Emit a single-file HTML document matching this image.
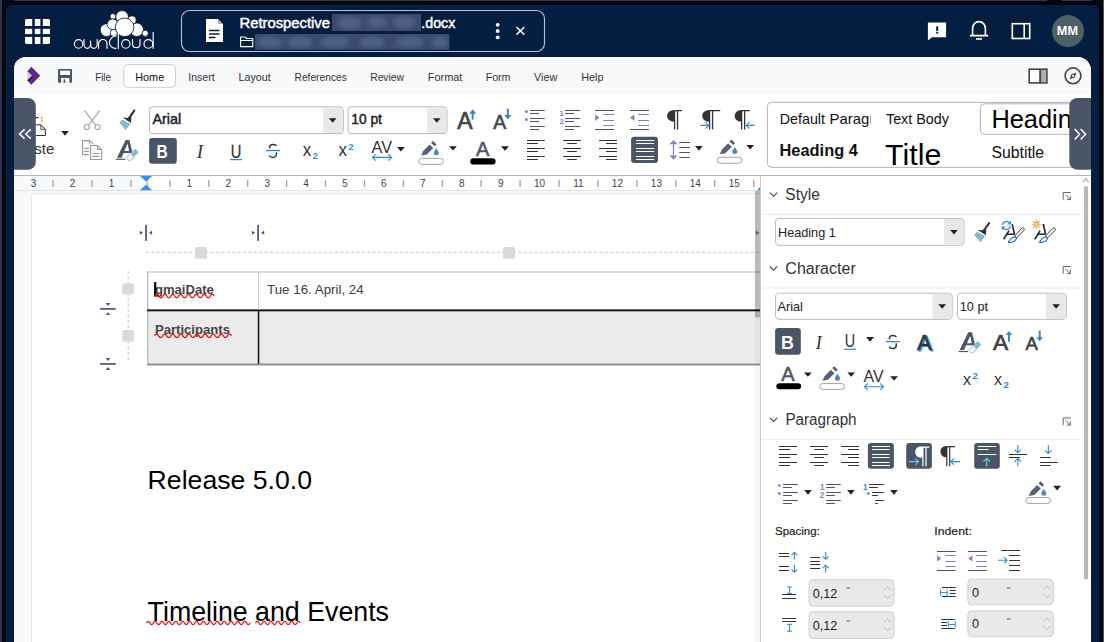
<!DOCTYPE html>
<html><head><meta charset="utf-8">
<style>
html,body{margin:0;padding:0;width:1104px;height:642px;overflow:hidden;background:#060a1a}
svg{display:block}
text{font-family:"Liberation Sans",sans-serif}
</style></head>
<body>
<svg width="1104" height="642" viewBox="0 0 1104 642">
<defs>
<filter id="blur" x="-20%" y="-50%" width="140%" height="200%"><feGaussianBlur stdDeviation="2"/></filter>
</defs>
<!-- outer frame -->
<rect x="0" y="0" width="1104" height="642" fill="#03060f"/>
<rect x="14" y="0" width="1033" height="1" fill="#33384e"/><rect x="1062" y="0" width="30" height="1" fill="#33384e"/>
<rect x="0" y="0" width="2" height="642" fill="#2e3347"/>
<rect x="1103" y="0" width="1" height="642" fill="#555"/>
<rect x="6" y="5" width="1093" height="700" rx="5" fill="#041e42"/>

<!-- HEADER -->
<g id="header">
<!-- grid icon -->
<rect x="25" y="19" width="25" height="24.9" rx="1.6" fill="#fff"/>
<g fill="#041e42"><rect x="32.2" y="18" width="2.6" height="27"/><rect x="40.4" y="18" width="2.4" height="27"/><rect x="24" y="26" width="27" height="2.8"/><rect x="24" y="34.1" width="27" height="2.8"/></g>
<!-- ownCloud logo -->
<g fill="#fff" stroke="#041e42" stroke-width="0.85">
<circle cx="106.6" cy="30.1" r="6.4"/>
<circle cx="136.7" cy="29.7" r="6.8"/>
<circle cx="145.2" cy="33.3" r="3.1"/>
<circle cx="132" cy="20" r="4.1"/>
<circle cx="112.9" cy="16.5" r="2.9"/>
<circle cx="122.1" cy="16.9" r="6.3"/>
<circle cx="112.6" cy="24.3" r="5.4"/>
<circle cx="113.8" cy="32.9" r="3.6"/>
<circle cx="124.6" cy="27.3" r="9.3"/>
</g>
<g fill="none" stroke="#fff" stroke-width="1.15" stroke-linecap="round">
<ellipse cx="78.6" cy="43.9" rx="4.2" ry="4.3"/>
<path d="M84 39.6 V44.3 A3.2 4 0 0 0 90.6 44.3 V41 M90.6 44.3 A3.2 4 0 0 0 97.2 44.3 V39.6"/>
<path d="M98.6 48.3 V43.8 A4.2 4.3 0 0 1 107 43.8 V48.3"/>
<path d="M116 36 A7 7 0 0 0 109.5 43 A6 5.3 0 0 0 116 48.3"/>
<path d="M118.3 32.5 V48.3"/>
<ellipse cx="125.8" cy="43.9" rx="4.2" ry="4.3"/>
<path d="M132.5 39.6 V44.3 A3.8 4 0 0 0 140 44.3 V39.6"/>
<ellipse cx="148.4" cy="43.9" rx="4.4" ry="4.3"/>
<path d="M153.2 32.5 V48.3"/>
</g>
<!-- filename box -->
<rect x="181.5" y="10.5" width="363" height="41" rx="8" fill="none" stroke="#b8c2d4" stroke-width="1.1"/>
<path d="M206 19 H218 L223 24 V42 H206 Z" fill="#fff"/>
<path d="M218 19 V24 H223" fill="#041e42" opacity="0.35"/>
<g stroke="#041e42" stroke-width="1.4"><path d="M209 30.5 H219.5 M209 34 H219.5 M209 37.5 H215.5"/></g>
<text x="239.5" y="28.2" font-size="14" fill="#fff" stroke="#fff" stroke-width="0.45" textLength="90.5" lengthAdjust="spacingAndGlyphs">Retrospective</text>
<clipPath id="cb1"><rect x="332.1" y="14.1" width="88.9" height="16.9"/></clipPath>
<g clip-path="url(#cb1)"><rect x="332" y="14" width="90" height="18" fill="#3a4b6d"/>
<g fill="#4f6183" filter="url(#blur)"><ellipse cx="350" cy="23" rx="12" ry="6"/><ellipse cx="377" cy="22" rx="10" ry="6"/><ellipse cx="404" cy="22.5" rx="11" ry="6"/></g></g>
<text x="421.3" y="28.2" font-size="14" fill="#fff" stroke="#fff" stroke-width="0.45" textLength="34" lengthAdjust="spacingAndGlyphs">.docx</text>
<path d="M240.6 37 H245 L246.5 38.5 H252.8 V46.6 H240.6 Z M240.6 40.5 H252.8" fill="none" stroke="#fff" stroke-width="1.1"/>
<clipPath id="cb2"><rect x="255" y="34.1" width="194.3" height="15.7"/></clipPath>
<g clip-path="url(#cb2)"><rect x="255" y="34" width="195" height="16" fill="#3a4b6d"/>
<g fill="#4f6183" filter="url(#blur)"><ellipse cx="270" cy="42" rx="12" ry="5.5"/><ellipse cx="300" cy="42" rx="12" ry="5.5"/><ellipse cx="335" cy="42" rx="14" ry="5.5"/><ellipse cx="372" cy="42" rx="13" ry="5.5"/><ellipse cx="410" cy="42" rx="14" ry="5.5"/><ellipse cx="440" cy="42" rx="9" ry="5.5"/></g></g>
<g fill="#fff"><circle cx="497.7" cy="24.8" r="1.9"/><circle cx="497.7" cy="31" r="1.9"/><circle cx="497.7" cy="37.3" r="1.9"/></g>
<path d="M516.5 27 L524.3 34.8 M524.3 27 L516.5 34.8" stroke="#fff" stroke-width="1.5"/>
<!-- right icons -->
<path d="M927.9 22.5 H946.1 V37.3 H932 L927.9 40.5 Z" fill="#fff"/>
<rect x="936.2" y="26.4" width="2" height="4.6" fill="#041e42"/><rect x="936.2" y="31.9" width="2" height="1.7" fill="#041e42"/>
<path d="M972.6 35.4 V28.6 A6.4 7 0 0 1 985.4 28.6 V35.4 M970 35.6 H988.2" fill="none" stroke="#fff" stroke-width="1.6"/>
<rect x="976" y="38.2" width="6" height="1.6" fill="#fff"/>
<rect x="1012.3" y="23.7" width="17.4" height="14.8" fill="none" stroke="#fff" stroke-width="1.6"/>
<rect x="1023.4" y="23.7" width="1.6" height="14.8" fill="#fff"/>
<circle cx="1068" cy="31" r="16" fill="#4e5f66"/>
<text x="1056.8" y="35.4" font-size="13" font-weight="bold" fill="#fff" textLength="21.2" lengthAdjust="spacingAndGlyphs">MM</text>
</g>

<!-- PANEL -->
<path d="M14 69 A12 12 0 0 1 26 57 H1077.5 A13.5 13.5 0 0 1 1091 70.5 V642 H14 Z" fill="#fff"/>
<!-- menubar -->
<path d="M14 69 A12 12 0 0 1 26 57 H1077.5 A13.5 13.5 0 0 1 1091 70.5 V94 H14 Z" fill="#f8f9fa"/>

<!-- menubar content -->
<path d="M27.3 71.3 L31.4 66.8 L40.2 75.8 L31.4 84.8 L27.3 80.4 L31.8 75.8 Z" fill="#5f2590"/>
<path d="M27.3 71.3 L31.8 75.8 L27.3 80.4 Z" fill="#cbcbcb"/>
<path d="M27.3 80.4 L31.8 75.8 L33 77 L29 81.5 Z" fill="#2d0f45" opacity="0.7"/>
<rect x="58" y="68.9" width="14" height="13.9" rx="0.8" fill="#4a5568"/>
<rect x="60.2" y="70.6" width="9.8" height="4.4" fill="#fff"/>
<rect x="61" y="78" width="8.4" height="4.8" fill="#fff"/>
<rect x="63.6" y="79.3" width="1.6" height="3.5" fill="#4a5568"/>
<rect x="123.9" y="64.5" width="51.6" height="22.8" rx="4" fill="#fff" stroke="#cdcfd2" stroke-width="1"/>
<g font-size="11.3" fill="#333">
<text x="95.2" y="81" textLength="15.8" lengthAdjust="spacingAndGlyphs">File</text>
<text x="135.2" y="81" fill="#111" textLength="29" lengthAdjust="spacingAndGlyphs">Home</text>
<text x="188.3" y="81" textLength="26.3" lengthAdjust="spacingAndGlyphs">Insert</text>
<text x="238.5" y="81" textLength="32.3" lengthAdjust="spacingAndGlyphs">Layout</text>
<text x="294.5" y="81" textLength="52.3" lengthAdjust="spacingAndGlyphs">References</text>
<text x="370.2" y="81" textLength="33.8" lengthAdjust="spacingAndGlyphs">Review</text>
<text x="427.8" y="81" textLength="34.5" lengthAdjust="spacingAndGlyphs">Format</text>
<text x="485.7" y="81" textLength="24.7" lengthAdjust="spacingAndGlyphs">Form</text>
<text x="534" y="81" textLength="23.2" lengthAdjust="spacingAndGlyphs">View</text>
<text x="581.2" y="81" textLength="22.2" lengthAdjust="spacingAndGlyphs">Help</text>
</g>
<rect x="1029.2" y="69.2" width="17.7" height="13.7" fill="#fff" stroke="#444" stroke-width="1.6"/>
<rect x="1041" y="70" width="5.1" height="12.1" fill="#b0b0b0"/>
<rect x="1039.2" y="69.2" width="1.9" height="13.7" fill="#444"/>
<circle cx="1073" cy="75.8" r="7.9" fill="none" stroke="#444" stroke-width="1.6"/>
<path d="M1076.4 72.4 L1074.6 77.4 L1069.6 79.2 L1071.4 74.2 Z" fill="#444"/>
<circle cx="1073" cy="75.8" r="1.1" fill="#fff"/>

<!-- TOOLBAR -->
<rect x="14" y="94" width="1077" height="81" fill="#fff"/>
<!-- left scroll btn -->
<path d="M14 98 H27.8 A8 8 0 0 1 35.8 106 V161.8 A8 8 0 0 1 27.8 169.8 H14 Z" fill="#4b5568"/>
<path d="M24.6 129.4 L19.6 134 L24.6 138.6 M30.8 129.4 L25.8 134 L30.8 138.6" fill="none" stroke="#fff" stroke-width="1.5"/>
<!-- paste partial -->
<g>
<path d="M35.5 117.6 H38.6" stroke="#333" stroke-width="1.3" fill="none"/>
<path d="M40.6 117.3 H42 V122.3" stroke="#f0a030" stroke-width="1.2" fill="none"/>
<path d="M36 124.8 H40.9 L45.4 129.3 V135.5 H36" fill="#f8f8f8" stroke="#333" stroke-width="1"/>
<path d="M40.9 124.8 V129.3 H45.4" fill="none" stroke="#333" stroke-width="0.9"/>
<text x="34.3" y="154.2" font-size="15" fill="#333">ste</text>
</g>
<path d="M61.2 131 H68.8 L65 135.8 Z" fill="#222"/>
<!-- scissors -->
<g fill="none" stroke="#a8a8a8" stroke-width="1.2">
<path d="M84.5 110.3 L95.5 124.8 M99.8 110.3 L88.8 124.8"/>
<circle cx="86.8" cy="127" r="2.5"/><circle cx="97.6" cy="127" r="2.5"/>
</g>
<!-- copy -->
<g fill="none" stroke="#9a9a9a" stroke-width="1.1">
<path d="M88.9 154.6 H82.6 V140.6 H89.6 L93.4 144.2"/>
<path d="M89.6 140.6 V143.7"/>
<path d="M84.3 148.4 H88.8 M84.3 151.4 H88.8"/>
<path d="M90.5 145.5 H97.6 L101.7 149.4 V159.5 H90.5 Z" fill="#fff"/>
<path d="M97.6 145.5 V149.4 H101.7"/>
<path d="M92.4 153.5 H99.8 M92.4 156.4 H99.8"/>
</g>
<!-- clone formatting brush -->
<path d="M134.3 110.7 L129.3 117.8" stroke="#333" stroke-width="2.1" stroke-linecap="round"/>
<path d="M122.8 117.6 L127.8 117.9 L129.6 116.4 L131.4 117.9 L130.9 122.9 Z" fill="#333"/>
<path d="M122.2 119.4 L130.4 124 L125.7 129.9 L119.3 122.6 Z" fill="#80bcd0"/>
<!-- clear formatting -->
<g id="clrfmt">
<path fill-rule="evenodd" d="M117 157.7 L125.7 140.1 H129.4 L132 150.8 L131.3 153 H123.5 L121.6 157.7 Z M124.4 151 L127.6 143.6 L129.1 151 Z" fill="#4a5568"/>
<rect x="116.1" y="158.7" width="9.3" height="1.2" fill="#4a5568"/>
<path d="M135 148.8 L138.7 152.3 L134.15 156.95 L130.55 153.35 Z" fill="#80bcd0"/>
<path d="M130.55 153.35 L134.15 156.95 L129.6 161.3 L126.3 157.9 Z" fill="#fff" stroke="#80bcd0" stroke-width="1"/>
</g>
<!-- font name box -->
<rect x="149.5" y="106.8" width="193.8" height="26.8" rx="3" fill="#fff" stroke="#b8b8b8" stroke-width="1"/>
<path d="M323 107.3 H340.3 A2.5 2.5 0 0 1 342.8 109.8 V130.6 A2.5 2.5 0 0 1 340.3 133.1 H323 Z" fill="#e8e8e8"/>
<path d="M328.9 118.3 H336.5 L332.7 122.8 Z" fill="#222"/>
<text x="152.4" y="124.2" font-size="13.8" fill="#222" stroke="#222" stroke-width="0.45" textLength="28.8" lengthAdjust="spacingAndGlyphs">Arial</text>
<rect x="348.2" y="106.8" width="98.8" height="26.8" rx="3" fill="#fff" stroke="#b8b8b8" stroke-width="1"/>
<path d="M427 107.3 H444 A2.5 2.5 0 0 1 446.5 109.8 V130.6 A2.5 2.5 0 0 1 444 133.1 H427 Z" fill="#e8e8e8"/>
<path d="M433 118.3 H440.6 L436.8 122.8 Z" fill="#222"/>
<text x="351.3" y="124.2" font-size="13.8" fill="#222" stroke="#222" stroke-width="0.45" textLength="30.6" lengthAdjust="spacingAndGlyphs">10 pt</text>
<!-- bold -->
<rect x="149.1" y="138" width="27.7" height="25.8" rx="3" fill="#4b5568"/>
<text x="156.6" y="158" font-size="18.8" font-weight="bold" fill="#fff" textLength="11.2" lengthAdjust="spacingAndGlyphs">B</text>
<text x="200" y="157.8" font-size="19" font-style="italic" fill="#333" font-family="Liberation Serif" text-anchor="middle" style="font-family:'Liberation Serif',serif">I</text>
<text x="230.7" y="158" font-size="19" fill="#333" stroke="#333" stroke-width="0.3" textLength="10.6" lengthAdjust="spacingAndGlyphs">U</text>
<rect x="230" y="159" width="12" height="1.2" fill="#2a8ad8"/>
<!-- strike -->
<g id="strk"><path d="M269.7 148.3 C269.1 145.7 270.9 144.4 273 144.4 C274.7 144.4 275.9 145 276.6 145.9 M276.3 152.3 C277.1 155.5 275.4 157.5 273 157.5 C271.2 157.5 269.9 156.8 269.3 155.5" fill="none" stroke="#333" stroke-width="1.5"/>
<rect x="266" y="149.9" width="14.1" height="1.3" fill="#2a8ad8"/></g>
<!-- subscript -->
<text x="302.8" y="155.7" font-size="17.5" fill="#333" textLength="8.5" lengthAdjust="spacingAndGlyphs">x</text>
<text x="312.8" y="158.7" font-size="9" font-weight="bold" fill="#2a8ad8">2</text>
<text x="338.6" y="155.7" font-size="17.5" fill="#333" textLength="8.5" lengthAdjust="spacingAndGlyphs">x</text>
<text x="348.6" y="150" font-size="9" font-weight="bold" fill="#2a8ad8">2</text>
<!-- spacing AV -->
<text x="371.5" y="152.9" font-size="16.3" fill="#333" textLength="20.5" lengthAdjust="spacingAndGlyphs">AV</text>
<path d="M372.5 157.4 H391.5 M375.8 154.2 L372.5 157.4 L375.8 160.6 M388.2 154.2 L391.5 157.4 L388.2 160.6" fill="none" stroke="#2a8ad8" stroke-width="1.1"/>
<path d="M397 147 H404.8 L400.9 151.4 Z" fill="#222"/>
<!-- highlight -->
<g>
<path d="M421.3 155.4 L423.2 151 L429.6 144.4 L433.3 147.9 L426.8 154.4 Z" fill="#56607a"/>
<path d="M431 142.7 L433 140.8 L436.6 144.4 L434.6 146.3 Z" fill="#56607a"/>
<path d="M436.3 148.2 C435 150.5 433.8 151.7 433.8 152.8 A2.5 2.5 0 0 0 438.8 152.8 C438.8 151.7 437.6 150.5 436.3 148.2 Z" fill="#4a86c8"/>
<rect x="418.6" y="158.4" width="24.8" height="6" rx="3" fill="#fff" stroke="#999" stroke-width="0.9"/>
</g>
<path d="M449.1 146.2 H456.8 L453 150.6 Z" fill="#222"/>

<!-- toolbar row1 right -->
<text x="457.2" y="128.6" font-size="24.3" fill="#444" stroke="#444" stroke-width="0.7" textLength="15.3" lengthAdjust="spacingAndGlyphs">A</text>
<path d="M472.7 119.6 V110.5" stroke="#3d85c6" stroke-width="2"/><path d="M469.2 113.8 L472.7 109.3 L476.2 113.8 Z" fill="#3d85c6"/>
<text x="493.3" y="128.6" font-size="19.8" fill="#444" stroke="#444" stroke-width="0.6" textLength="12.9" lengthAdjust="spacingAndGlyphs">A</text>
<path d="M507.8 108.7 V117.5" stroke="#3d85c6" stroke-width="2"/><path d="M504.3 115 L507.8 119.6 L511.3 115 Z" fill="#3d85c6"/>
<!-- bullets -->
<g fill="#8e7cc3"><circle cx="526.4" cy="111.4" r="1.5"/><circle cx="526.4" cy="119.4" r="1.5"/></g>
<path d="M530 110.5 H544.8 M530 113.5 H539 M530 118.5 H544.8 M530 121.5 H539 M530 126.5 H544.8 M530 129.5 H539" stroke="#4a5568" stroke-width="1"/>
<!-- numbering -->
<text x="559.6" y="115.6" font-size="8" font-weight="bold" fill="#8e7cc3">1</text>
<text x="559.4" y="124.2" font-size="8" font-weight="bold" fill="#8e7cc3">2</text>
<path d="M565 110.5 H580 M565 113.5 H574 M565 118.5 H580 M565 121.5 H574 M565 126.5 H580 M565 129.5 H574" stroke="#4a5568" stroke-width="1"/>
<!-- indent -->
<path d="M595.1 110.5 H614.1 M595.1 129.5 H614.1" stroke="#4a5568" stroke-width="1"/>
<path d="M603.2 114.5 H614.1 M603.2 120.5 H614.1 M603.2 125.5 H614.1" stroke="#8e7cc3" stroke-width="1"/>
<path d="M595.1 114.4 L599.4 117.6 L595.1 120.9 Z" fill="#8e7cc3"/>
<path d="M630 110.5 H649 M630 129.5 H649" stroke="#4a5568" stroke-width="1"/>
<path d="M638 114.5 H649 M638 120.5 H649 M638 125.5 H649" stroke="#8e7cc3" stroke-width="1"/>
<path d="M634.4 114.4 L630.1 117.6 L634.4 120.9 Z" fill="#8e7cc3"/>
<!-- pilcrows -->
<g id="pil">
<path d="M674.4 110 H682 V111.2 H678.2 V129.6 H676.9 V111.2 H675.2 V129.6 H674 V121.8 A7 5.9 0 0 1 674 110 Z" fill="#333"/>
</g>
<path d="M709.4 110 H720.2 V111.2 H713.2 V129.6 H711.9 V111.2 H710.2 V129.6 H709 V121.8 A7 5.9 0 0 1 709.4 110 Z" fill="#333"/>
<path d="M700.5 125.4 H708.6 M705.4 122.2 L708.6 125.4 L705.4 128.6" fill="none" stroke="#2a8ad8" stroke-width="1.1"/>
<path d="M741.2 110 H749.8 V111.2 H745.3 V129.6 H744 V111.2 H742.3 V129.6 H741 V121.8 A6.5 5.9 0 0 1 741.2 110 Z" fill="#333"/>
<path d="M746.3 125.4 H754.6 M749.5 122.2 L746.3 125.4 L749.5 128.6" fill="none" stroke="#2a8ad8" stroke-width="1.1"/>
<!-- row2 right -->
<text x="476" y="155.6" font-size="19.8" fill="#4a5568" stroke="#4a5568" stroke-width="0.5" textLength="13.4" lengthAdjust="spacingAndGlyphs">A</text>
<rect x="470.3" y="158.3" width="25.3" height="6.2" rx="3.1" fill="#000"/>
<path d="M501 146.3 H508.9 L505 150.7 Z" fill="#222"/>
<!-- align -->
<path d="M527 140.5 H544.8 M527 143.5 H537.9 M527 148.5 H544.8 M527 151.5 H537.9 M527 156.5 H544.8 M527 159.5 H537.9" stroke="#333" stroke-width="1"/>
<path d="M563 140.5 H581 M567.2 143.5 H576.8 M563 148.5 H581 M567.2 151.5 H576.8 M563 156.5 H581 M567.2 159.5 H576.8" stroke="#333" stroke-width="1"/>
<path d="M599.1 140.5 H616.9 M606 143.5 H616.9 M599.1 148.5 H616.9 M606 151.5 H616.9 M599.1 156.5 H616.9 M606 159.5 H616.9" stroke="#333" stroke-width="1"/>
<rect x="631.1" y="136.8" width="26.9" height="26.2" rx="3" fill="#4b5568"/>
<path d="M635.9 140.5 H654.2 M635.9 143.5 H654.2 M635.9 148.5 H654.2 M635.9 151.5 H654.2 M635.9 156.5 H654.2 M635.9 159.5 H654.2" stroke="#fff" stroke-width="1"/>
<!-- line spacing -->
<path d="M673.5 141.5 V158.3" stroke="#8e7cc3" stroke-width="1.2"/>
<path d="M669.4 144.2 L673.5 140.1 L677.6 144.2 Z M669.4 155.6 L673.5 159.7 L677.6 155.6 Z" fill="#8e7cc3"/>
<path d="M679.2 142.5 H689.9 M679.2 147.5 H689.9 M679.2 152.5 H689.9 M679.2 157.5 H689.9" stroke="#4a5568" stroke-width="1"/>
<path d="M695.1 146.1 H702.7 L698.9 150.7 Z" fill="#222"/>
<!-- para bg -->
<g transform="translate(298.5,-1.2)">
<path d="M421.3 155.4 L423.2 151 L429.6 144.4 L433.3 147.9 L426.8 154.4 Z" fill="#56607a"/>
<path d="M431 142.7 L433 140.8 L436.6 144.4 L434.6 146.3 Z" fill="#56607a"/>
<path d="M436.3 148.2 C435 150.5 433.8 151.7 433.8 152.8 A2.5 2.5 0 0 0 438.8 152.8 C438.8 151.7 437.6 150.5 436.3 148.2 Z" fill="#4a86c8"/>
<rect x="418.6" y="158.4" width="24.8" height="6" rx="3" fill="#fff" stroke="#999" stroke-width="0.9"/>
</g>
<path d="M746.3 144.9 H754 L750.2 149.5 Z" fill="#222"/>

<!-- styles box -->
<defs><clipPath id="clipDP"><rect x="770" y="100" width="100.8" height="30"/></clipPath></defs>
<rect x="767.4" y="102.4" width="340" height="65" rx="4" fill="#fff" stroke="#b5b5b5" stroke-width="1"/>
<g clip-path="url(#clipDP)" font-size="14.3" fill="#111"><text x="779.7" y="124" textLength="45.3" lengthAdjust="spacingAndGlyphs">Default</text><text x="829.6" y="124" textLength="39.6" lengthAdjust="spacingAndGlyphs">Parag</text><text x="869.4" y="124">r</text></g>
<text x="886" y="124.3" font-size="14.3" fill="#111">Text Body</text>
<rect x="980.4" y="103.8" width="120" height="30.5" rx="4" fill="#fff" stroke="#b5b5b5" stroke-width="1"/>
<text x="991.4" y="127.5" font-size="25.4" fill="#000">Heading 1</text>
<text x="779.5" y="156.1" font-size="16.4" font-weight="bold" fill="#111">Heading 4</text>
<text x="885" y="164.8" font-size="30.4" fill="#000">Title</text>
<text x="991.4" y="157.8" font-size="15.8" fill="#111">Subtitle</text>
<!-- right scroll btn -->
<path d="M1091 98 H1077.3 A8 8 0 0 0 1069.3 106 V161.7 A8 8 0 0 0 1077.3 169.7 H1091 Z" fill="#4b5568"/>
<path d="M1074.6 129 L1079.6 134.2 L1074.6 139.4 M1080.6 129 L1085.6 134.2 L1080.6 139.4" fill="none" stroke="#fff" stroke-width="1.5"/>
<rect x="1091" y="94" width="8" height="90" fill="#041e42"/>

<!-- RULER -->
<rect x="14" y="175" width="1077" height="1" fill="#b4b4b4"/>
<rect x="14" y="176" width="747" height="14" fill="#f8f9fa"/>
<rect x="147" y="176" width="613" height="14" fill="#fff"/>
<rect x="14" y="190" width="747" height="1" fill="#e3e4e6"/>
<g font-size="10" fill="#444" text-anchor="middle">
<text x="33.6" y="187" >3</text>
<text x="72.6" y="187" >2</text>
<text x="111.5" y="187" >1</text>
<text x="189.3" y="187">1</text>
<text x="228.2" y="187">2</text>
<text x="267.2" y="187">3</text>
<text x="306.1" y="187">4</text>
<text x="345.0" y="187">5</text>
<text x="383.9" y="187">6</text>
<text x="422.8" y="187">7</text>
<text x="461.8" y="187">8</text>
<text x="500.7" y="187">9</text>
<text x="539.6" y="187">10</text>
<text x="578.5" y="187">11</text>
<text x="617.4" y="187">12</text>
<text x="656.4" y="187">13</text>
<text x="695.3" y="187">14</text>
<text x="734.2" y="187">15</text>
</g>
<g fill="#a8a8a8">
<rect x="52.4" y="180" width="1.4" height="7"/>
<rect x="91.3" y="180" width="1.4" height="7"/>
<rect x="130.2" y="180" width="1.4" height="7"/>
<rect x="169.2" y="180" width="1.4" height="7"/>
<rect x="208.1" y="180" width="1.4" height="7"/>
<rect x="247.0" y="180" width="1.4" height="7"/>
<rect x="285.9" y="180" width="1.4" height="7"/>
<rect x="324.8" y="180" width="1.4" height="7"/>
<rect x="363.8" y="180" width="1.4" height="7"/>
<rect x="402.7" y="180" width="1.4" height="7"/>
<rect x="441.6" y="180" width="1.4" height="7"/>
<rect x="480.5" y="180" width="1.4" height="7"/>
<rect x="519.4" y="180" width="1.4" height="7"/>
<rect x="558.4" y="180" width="1.4" height="7"/>
<rect x="597.3" y="180" width="1.4" height="7"/>
<rect x="636.2" y="180" width="1.4" height="7"/>
<rect x="675.1" y="180" width="1.4" height="7"/>
<rect x="714.0" y="180" width="1.4" height="7"/>
<rect x="753.0" y="180" width="1.4" height="7"/>
</g>
<rect x="146.3" y="176" width="2" height="14" fill="#c8c8c8"/>
<path d="M139.9 176 H152.2 L146 181.6 Z M139.9 190.2 H152.2 L146 184.8 Z" fill="#2f8ff0"/>
<path d="M757 190.4 L760.4 186.5 V190.4 Z" fill="#2f8ff0"/>
<!-- DOC AREA -->
<rect x="14" y="191" width="747" height="451" fill="#f8f9fa"/>
<rect x="31.5" y="193.5" width="740" height="460" rx="1.5" fill="#fff" stroke="#e6e7e9" stroke-width="1"/>
<!-- col markers -->
<g fill="#505a70">
<rect x="145.1" y="224.9" width="1.8" height="16"/>
<path d="M139.8 230.8 L143.1 232.8 L139.8 234.8 Z M152.1 230.8 L148.8 232.8 L152.1 234.8 Z"/>
<rect x="257.2" y="224.9" width="1.8" height="16"/>
<path d="M251.9 230.8 L255.2 232.8 L251.9 234.8 Z M264.2 230.8 L260.9 232.8 L264.2 234.8 Z"/>
</g>
<path d="M145.9 252.3 H760.5" stroke="#c6c6c6" stroke-width="1" stroke-dasharray="3 2.4"/>
<rect x="195" y="246.9" width="12" height="11.9" rx="1.5" fill="#dadada"/>
<rect x="503" y="246.9" width="12" height="11.9" rx="1.5" fill="#dadada"/>
<!-- row markers -->
<path d="M128.2 271 V362" stroke="#c6c6c6" stroke-width="1" stroke-dasharray="3 2.4"/>
<rect x="122.3" y="283.2" width="11.6" height="11.4" rx="1.5" fill="#dadada"/>
<rect x="122.3" y="330" width="11.6" height="11.7" rx="1.5" fill="#dadada"/>
<g fill="#56607a">
<rect x="100" y="308" width="15.7" height="1.8"/>
<path d="M105.6 302.9 H110.5 L108.05 306 Z M105.6 315 H110.5 L108.05 311.9 Z"/>
<rect x="100" y="363" width="15.7" height="1.8"/>
<path d="M105.6 358 H110.5 L108.05 361.1 Z M105.6 370.1 H110.5 L108.05 367 Z"/>
</g>
<!-- table -->
<rect x="148" y="272" width="613" height="38" fill="#fff"/>
<rect x="148" y="311" width="613" height="53" fill="#ebebeb"/>
<rect x="147.2" y="271.2" width="613" height="1.6" fill="#d3d3d3"/>
<rect x="147.1" y="271.2" width="1.3" height="93.5" fill="#bdbdbd"/>
<rect x="258" y="272" width="1.2" height="38" fill="#cfcfcf"/>
<rect x="147.1" y="309.4" width="613" height="1.9" fill="#111"/>
<rect x="257.8" y="311" width="1.5" height="53" fill="#111"/>
<rect x="147.1" y="363.6" width="613" height="1.8" fill="#8a8a8a"/>
<text x="154.9" y="293.6" font-size="12.6" font-weight="bold" fill="#444" textLength="59" lengthAdjust="spacingAndGlyphs">gmaiDate</text>
<text x="154.9" y="333.5" font-size="12.6" font-weight="bold" fill="#444" textLength="75.1" lengthAdjust="spacingAndGlyphs">Participants</text>
<text x="267" y="293.7" font-size="12" fill="#404040" textLength="96.7" lengthAdjust="spacingAndGlyphs">Tue 16. April, 24</text>
<rect x="154.1" y="282" width="2.2" height="14.6" fill="#000"/>
<text x="147.6" y="489.2" font-size="26.65" fill="#000">Release 5.0.0</text>
<text x="147.6" y="620.5" font-size="26.75" fill="#000">Timeline and Events</text>
<path d="M155.0 296.0 Q156.97 292.20 158.95 296.00 Q160.92 299.80 162.90 296.00 Q164.87 292.20 166.85 296.00 Q168.82 299.80 170.80 296.00 Q172.77 292.20 174.75 296.00 Q176.72 299.80 178.70 296.00 Q180.67 292.20 182.65 296.00 Q184.62 299.80 186.60 296.00 Q188.57 292.20 190.55 296.00 Q192.52 299.80 194.50 296.00 Q196.47 292.20 198.45 296.00 Q200.42 299.80 202.40 296.00 Q204.37 292.20 206.35 296.00 Q208.32 299.80 210.30 296.00 Q212.27 292.20 214.25 296.00" fill="none" stroke="#f00" stroke-width="1.2"/>
<path d="M154.5 335.9 Q156.53 332.30 158.55 335.90 Q160.58 339.50 162.60 335.90 Q164.63 332.30 166.65 335.90 Q168.68 339.50 170.70 335.90 Q172.73 332.30 174.75 335.90 Q176.78 339.50 178.80 335.90 Q180.83 332.30 182.85 335.90 Q184.88 339.50 186.90 335.90 Q188.93 332.30 190.95 335.90 Q192.98 339.50 195.00 335.90 Q197.03 332.30 199.05 335.90 Q201.08 339.50 203.10 335.90 Q205.13 332.30 207.15 335.90 Q209.18 339.50 211.20 335.90 Q213.23 332.30 215.25 335.90 Q217.28 339.50 219.30 335.90 Q221.33 332.30 223.35 335.90 Q225.38 339.50 227.40 335.90 Q229.43 332.30 231.45 335.90" fill="none" stroke="#f00" stroke-width="1.2"/>
<path d="M146.5 623.0 Q148.22 619.60 149.95 623.00 Q151.67 626.40 153.40 623.00 Q155.12 619.60 156.85 623.00 Q158.57 626.40 160.30 623.00 Q162.02 619.60 163.75 623.00 Q165.47 626.40 167.20 623.00 Q168.92 619.60 170.65 623.00 Q172.37 626.40 174.10 623.00 Q175.82 619.60 177.55 623.00 Q179.27 626.40 181.00 623.00 Q182.72 619.60 184.45 623.00 Q186.17 626.40 187.90 623.00 Q189.62 619.60 191.35 623.00 Q193.07 626.40 194.80 623.00 Q196.52 619.60 198.25 623.00 Q199.97 626.40 201.70 623.00 Q203.42 619.60 205.15 623.00 Q206.87 626.40 208.60 623.00 Q210.32 619.60 212.05 623.00 Q213.77 626.40 215.50 623.00 Q217.22 619.60 218.95 623.00 Q220.67 626.40 222.40 623.00 Q224.12 619.60 225.85 623.00 Q227.57 626.40 229.30 623.00 Q231.02 619.60 232.75 623.00 Q234.47 626.40 236.20 623.00 Q237.92 619.60 239.65 623.00 Q241.37 626.40 243.10 623.00 Q244.82 619.60 246.55 623.00 Q248.27 626.40 250.00 623.00" fill="none" stroke="#f00" stroke-width="1.2"/>
<path d="M255.5 623.0 Q257.23 619.60 258.95 623.00 Q260.68 626.40 262.40 623.00 Q264.12 619.60 265.85 623.00 Q267.57 626.40 269.30 623.00 Q271.02 619.60 272.75 623.00 Q274.47 626.40 276.20 623.00 Q277.92 619.60 279.65 623.00 Q281.37 626.40 283.10 623.00 Q284.82 619.60 286.55 623.00 Q288.27 626.40 290.00 623.00 Q291.72 619.60 293.45 623.00 Q295.17 626.40 296.90 623.00 Q298.62 619.60 300.35 623.00" fill="none" stroke="#f00" stroke-width="1.2"/>
<!-- doc scrollbar -->
<rect x="755" y="317.4" width="5.5" height="325" fill="#000" opacity="0.035"/>
<rect x="755" y="191" width="5.5" height="126.4" fill="#000" opacity="0.27"/>
<path d="M756 230.5 L759.2 232.9 L756 235.3 Z" fill="#505a70"/>

<!-- SIDEBAR -->
<rect x="760.5" y="176" width="330.5" height="466" fill="#fff"/>
<rect x="760" y="175.5" width="1" height="467" fill="#cfcfcf"/>
<!-- sidebar scrollbar -->
<path d="M1082.7 182.3 L1085.8 178.6 L1088.9 182.3" fill="none" stroke="#c6c6c6" stroke-width="1.8"/>
<rect x="1083.9" y="186" width="4.2" height="393.5" rx="2.1" fill="#b8b8b8"/>
<!-- section headers -->
<g fill="none" stroke="#444" stroke-width="1.1">
<path d="M769.8 192.6 L773.5 196.3 L777.2 192.6"/>
<path d="M769.8 266.4 L773.5 270.1 L777.2 266.4"/>
<path d="M769.8 417.8 L773.5 421.5 L777.2 417.8"/>
</g>
<g font-size="15.6" fill="#333">
<text x="785.3" y="199.5" textLength="34.6" lengthAdjust="spacingAndGlyphs">Style</text>
<text x="785.3" y="273.8" textLength="70.5" lengthAdjust="spacingAndGlyphs">Character</text>
<text x="785.4" y="424.9" textLength="71.2" lengthAdjust="spacingAndGlyphs">Paragraph</text>
</g>
<g fill="none" stroke="#666" stroke-width="1">
<path d="M1063.2 199.7 V192.5 H1070.8 M1065.5 194.8 L1070.3 199.6 M1066.8 199.6 H1070.3 V196"/>
<path d="M1063.2 273.7 V266.5 H1070.8 M1065.5 268.8 L1070.3 273.6 M1066.8 273.6 H1070.3 V270"/>
<path d="M1063.2 425.2 V418 H1070.8 M1065.5 420.3 L1070.3 425.1 M1066.8 425.1 H1070.3 V421.5"/>
</g>
<rect x="761" y="214.1" width="320" height="1" fill="#ececec"/>
<rect x="761" y="287.6" width="320" height="1" fill="#ececec"/>
<rect x="761" y="438.9" width="320" height="1" fill="#ececec"/>
<!-- style dropdown -->
<rect x="775.5" y="218.5" width="188.5" height="26.8" rx="3.5" fill="#fff" stroke="#bdbdbd" stroke-width="1"/>
<path d="M944 219 H961 A2.5 2.5 0 0 1 963.5 221.5 V242.3 A2.5 2.5 0 0 1 961 244.8 H944 Z" fill="#e8e8e8"/>
<path d="M950.2 230 H957.8 L954 234.5 Z" fill="#222"/>
<text x="778" y="236.6" font-size="12.7" fill="#222" textLength="57.8" lengthAdjust="spacingAndGlyphs">Heading 1</text>
<!-- style icons -->
<g transform="translate(854.9,112.3)">
<path d="M134.3 110.7 L129.3 117.8" stroke="#333" stroke-width="2.1" stroke-linecap="round"/>
<path d="M122.8 117.6 L127.8 117.9 L129.6 116.4 L131.4 117.9 L130.9 122.9 Z" fill="#333"/>
<path d="M122.2 119.4 L130.4 124 L125.7 129.9 L119.3 122.6 Z" fill="#80bcd0"/>
</g>
<g fill="none" stroke="#2a8ad8" stroke-width="1.2">
<path d="M1002.4 225 A4.1 4.1 0 0 1 1009.8 223.2"/>
<path d="M1010.4 226 A4.1 4.1 0 0 1 1003 227.8"/>
</g>
<path d="M1011 220.8 V224.6 H1007.4 Z M1001.8 230.2 V226.4 H1005.4 Z" fill="#2a8ad8"/>
<g id="astyle">
<path d="M1003.6 239.2 L1009 230.6 M1012.2 224.3 L1014.5 234.2 M1007.1 234.2 H1014.6" fill="none" stroke="#262626" stroke-width="1.6"/>
<path d="M1023.8 228.3 A1.5 1.5 0 0 0 1021.6 228.3 L1014.6 236 L1016.6 237.8 L1023.8 230.4 A1.5 1.5 0 0 0 1023.8 228.3 Z" fill="#fff" stroke="#262626" stroke-width="0.9"/>
<path d="M1015.6 236.9 C1012.5 236.5 1009.5 239.5 1008.4 242.3 C1011.5 242.8 1015.5 241.5 1016.6 238.4 Z" fill="#fff" stroke="#1565c0" stroke-width="1.1"/>
</g>
<use href="#astyle" transform="translate(31.1,0)"/>
<path d="M1042.8 225.8 L1044 224.4" stroke="#262626" stroke-width="1.4"/>
<g stroke="#f68b1f" stroke-width="1.1" fill="none">
<circle cx="1036.4" cy="224.3" r="1.9" fill="#eef8fc"/>
<path d="M1036.4 219.8 V221.6 M1036.4 227 V228.8 M1031.9 224.3 H1033.7 M1039.1 224.3 H1040.9 M1033.2 221.1 L1034.5 222.4 M1038.3 226.2 L1039.6 227.5 M1039.6 221.1 L1038.3 222.4 M1034.5 226.2 L1033.2 227.5"/>
</g>
<!-- character dropdowns -->
<rect x="775.5" y="293.2" width="176.7" height="26.2" rx="3.5" fill="#fff" stroke="#bdbdbd" stroke-width="1"/>
<path d="M932.5 293.7 H949.2 A2.5 2.5 0 0 1 951.7 296.2 V316.4 A2.5 2.5 0 0 1 949.2 318.9 H932.5 Z" fill="#e8e8e8"/>
<path d="M938.4 304.2 H946 L942.2 308.7 Z" fill="#222"/>
<text x="777.5" y="310.6" font-size="12.7" fill="#222">Arial</text>
<rect x="957.5" y="293.2" width="108.9" height="26.2" rx="3.5" fill="#fff" stroke="#bdbdbd" stroke-width="1"/>
<path d="M1046 293.7 H1063.4 A2.5 2.5 0 0 1 1065.9 296.2 V316.4 A2.5 2.5 0 0 1 1063.4 318.9 H1046 Z" fill="#e8e8e8"/>
<path d="M1052.3 304.2 H1059.9 L1056.1 308.7 Z" fill="#222"/>
<text x="959.8" y="310.6" font-size="12.7" fill="#222">10 pt</text>
<!-- char row 1 -->
<rect x="775.1" y="328" width="25.7" height="26.7" rx="3" fill="#4b5568"/>
<text x="787.3" y="349.3" font-size="17.8" font-weight="bold" fill="#fff" text-anchor="middle">B</text>
<text x="818.8" y="349.3" font-size="18" font-style="italic" fill="#333" text-anchor="middle" style="font-family:'Liberation Serif',serif">I</text>
<text x="850" y="347.1" font-size="17.5" fill="#333" text-anchor="middle" textLength="10.4" lengthAdjust="spacingAndGlyphs">U</text>
<rect x="844.2" y="348.7" width="11.8" height="1.2" fill="#2a8ad8"/>
<path d="M866.1 337 H874 L870.05 341.7 Z" fill="#222"/>
<use href="#strk" transform="translate(619.8,191.1)"/>
<text x="918.4" y="350.7" font-size="22.4" fill="#2a8ad8" stroke="#2a8ad8" stroke-width="0.8" textLength="14.5" lengthAdjust="spacingAndGlyphs">A</text>
<text x="917" y="350.3" font-size="22.4" fill="#333" stroke="#333" stroke-width="0.6" textLength="14.5" lengthAdjust="spacingAndGlyphs">A</text>
<use href="#clrfmt" transform="translate(842.6,192.2)"/>
<text x="993.1" y="350.2" font-size="22.8" fill="#444" stroke="#444" stroke-width="0.7" textLength="15.2" lengthAdjust="spacingAndGlyphs">A</text>
<path d="M1009 341.7 V332.5" stroke="#3d85c6" stroke-width="2"/><path d="M1005.7 335 L1009 330.9 L1012.3 335 Z" fill="#3d85c6"/>
<text x="1025.6" y="350.2" font-size="18.4" fill="#444" stroke="#444" stroke-width="0.6" textLength="12.4" lengthAdjust="spacingAndGlyphs">A</text>
<path d="M1039.7 330.6 V339" stroke="#3d85c6" stroke-width="2"/><path d="M1036.4 337.2 L1039.7 341.3 L1043 337.2 Z" fill="#3d85c6"/>
<!-- char row 3 -->
<text x="781.2" y="381.3" font-size="19.8" fill="#4a5568" stroke="#4a5568" stroke-width="0.5" textLength="13.4" lengthAdjust="spacingAndGlyphs">A</text>
<rect x="776.3" y="383.2" width="24.8" height="6" rx="3" fill="#000"/>
<path d="M804 372.5 H811.8 L807.9 376.8 Z" fill="#222"/>
<g transform="translate(401.2,225.4)">
<path d="M421.3 155.4 L423.2 151 L429.6 144.4 L433.3 147.9 L426.8 154.4 Z" fill="#56607a"/>
<path d="M431 142.7 L433 140.8 L436.6 144.4 L434.6 146.3 Z" fill="#56607a"/>
<path d="M436.3 148.2 C435 150.5 433.8 151.7 433.8 152.8 A2.5 2.5 0 0 0 438.8 152.8 C438.8 151.7 437.6 150.5 436.3 148.2 Z" fill="#4a86c8"/>
<rect x="418.6" y="158.2" width="24.8" height="5.8" rx="2.9" fill="#fff" stroke="#999" stroke-width="0.9"/>
</g>
<path d="M847.4 372.5 H855 L851.2 376.8 Z" fill="#222"/>
<text x="863.6" y="381.6" font-size="15.8" fill="#333" textLength="19.9" lengthAdjust="spacingAndGlyphs">AV</text>
<path d="M864.5 386.7 H883.5 M867.8 383.5 L864.5 386.7 L867.8 389.9 M880.2 383.5 L883.5 386.7 L880.2 389.9" fill="none" stroke="#2a8ad8" stroke-width="1.1"/>
<path d="M890.2 376.3 H898 L894.1 380.6 Z" fill="#222"/>
<text x="963" y="384.8" font-size="17" fill="#333" textLength="8" lengthAdjust="spacingAndGlyphs">x</text>
<text x="972.5" y="378.9" font-size="9.6" font-weight="bold" fill="#2a8ad8">2</text>
<text x="994.1" y="384.8" font-size="17" fill="#333" textLength="8" lengthAdjust="spacingAndGlyphs">x</text>
<text x="1003.4" y="387.8" font-size="9.6" font-weight="bold" fill="#2a8ad8">2</text>

<!-- paragraph row 1 -->
<path d="M778.9 446.5 H797 M778.9 449.5 H789.9 M778.9 454.5 H797 M778.9 457.5 H789.9 M778.9 462.5 H797 M778.9 465.5 H789.9 " stroke="#333" stroke-width="1"/>
<path d="M810 446.5 H828.1 M814.4 449.5 H823.9 M810 454.5 H828.1 M814.4 457.5 H823.9 M810 462.5 H828.1 M814.4 465.5 H823.9 " stroke="#333" stroke-width="1"/>
<path d="M841 446.5 H859 M848 449.5 H859 M841 454.5 H859 M848 457.5 H859 M841 462.5 H859 M848 465.5 H859 " stroke="#333" stroke-width="1"/>
<rect x="867.9" y="443.1" width="26" height="25.7" rx="3" fill="#4b5568"/>
<path d="M872.1 446.5 H889.8 M872.1 449.5 H889.8 M872.1 454.5 H889.8 M872.1 457.5 H889.8 M872.1 462.5 H889.8 M872.1 465.5 H889.8 " stroke="#fff" stroke-width="1"/>
<rect x="906.2" y="443.1" width="25.7" height="25.7" rx="3" fill="#4b5568"/>
<path d="M919.3 446.5 H929.3 V447.7 H926.6 V466.2 H925.4 V447.7 H923.5 V466.2 H922.3 V457.5 A5.5 5.5 0 0 1 919.3 446.5 Z" fill="#fff"/>
<path d="M908.9 461.6 H918.5 M915.3 458.4 L918.5 461.6 L915.3 464.8" fill="none" stroke="#5ed0f0" stroke-width="1.1"/>
<path d="M945.8 446 H955 V447.2 H950.3 V466.2 H949.1 V447.2 H947.4 V466.2 H946.2 V457.2 A5.6 5.6 0 0 1 945.8 446 Z" fill="#333"/>
<path d="M950.8 461.6 H960.1 M954 458.4 L950.8 461.6 L954 464.8" fill="none" stroke="#2a8ad8" stroke-width="1.1"/>
<rect x="974.2" y="443.1" width="25.6" height="25.7" rx="3" fill="#4b5568"/>
<path d="M977.8 446.5 H996.2 M977.8 449.5 H988.5 M977.8 454.5 H996.2" stroke="#fff" stroke-width="1"/>
<path d="M986.7 466.5 V458.5 M983.5 461.5 L986.7 458.2 L989.9 461.5" fill="none" stroke="#5ed0f0" stroke-width="1.1"/>
<path d="M1009 454.5 H1027 M1009 457.5 H1020.1" stroke="#333" stroke-width="1"/>
<path d="M1017.8 445 V452.8 M1014.6 449.6 L1017.8 452.8 L1021 449.6 M1017.8 466.3 V458.5 M1014.6 461.7 L1017.8 458.5 L1021 461.7" fill="none" stroke="#2a8ad8" stroke-width="1.1"/>
<path d="M1040.1 457.5 H1050.6 M1040.1 462.5 H1057.8 M1040.1 465.5 H1050.6" stroke="#333" stroke-width="1"/>
<path d="M1048.3 445 V453.5 M1045.1 450.3 L1048.3 453.5 L1051.5 450.3" fill="none" stroke="#2a8ad8" stroke-width="1.1"/>
<!-- paragraph row 2 -->
<g fill="#8e7cc3"><circle cx="779.3" cy="485.6" r="1.4"/><circle cx="779.3" cy="493.5" r="1.4"/></g>
<path d="M783.1 484.5 H797.9 M783.1 487.5 H791.8 M783.1 492.5 H797.9 M783.1 495.5 H791.8 M783.1 500.5 H797.9 M783.1 503.5 H791.8 " stroke="#4a5568" stroke-width="1"/>
<path d="M804.2 490 H811.8 L808 494.8 Z" fill="#222"/>
<text x="819.9" y="490.1" font-size="8.2" font-weight="bold" fill="#8e7cc3">1</text>
<text x="819.7" y="498.3" font-size="8.2" font-weight="bold" fill="#8e7cc3">2</text>
<path d="M826.2 484.5 H840.8 M826.2 487.5 H834.9 M826.2 492.5 H840.8 M826.2 495.5 H834.9 M826.2 500.5 H840.8 M826.2 503.5 H834.9 " stroke="#4a5568" stroke-width="1"/>
<path d="M847.1 490 H854.7 L850.9 494.8 Z" fill="#222"/>
<text x="862.9" y="490.1" font-size="8.2" font-weight="bold" fill="#2a8ad8">1</text>
<circle cx="868.3" cy="493.5" r="1.3" fill="#2a8ad8"/>
<path d="M869.2 484.5 H883.9 M869.2 487.5 H877.8 M872.1 492.5 H883.9 M872.1 495.5 H877.8 M875.2 500.5 H883.9 M875.2 503.5 H877.8" stroke="#333" stroke-width="1"/>
<path d="M890.2 490 H897.8 L894 494.8 Z" fill="#222"/>
<g transform="translate(607.5,340.5)">
<path d="M421.3 155.4 L423.2 151 L429.6 144.4 L433.3 147.9 L426.8 154.4 Z" fill="#56607a"/>
<path d="M431 142.7 L433 140.8 L436.6 144.4 L434.6 146.3 Z" fill="#56607a"/>
<path d="M436.3 148.2 C435 150.5 433.8 151.7 433.8 152.8 A2.5 2.5 0 0 0 438.8 152.8 C438.8 151.7 437.6 150.5 436.3 148.2 Z" fill="#4a86c8"/>
<rect x="418.3" y="157" width="24.8" height="5.9" rx="2.9" fill="#fff" stroke="#999" stroke-width="0.9"/>
</g>
<path d="M1053.2 485.7 H1061 L1057.1 490.6 Z" fill="#222"/>
<!-- spacing / indent -->
<g font-size="11.8" fill="#222" stroke="#222" stroke-width="0.2">
<text x="775" y="535.2" textLength="44.8" lengthAdjust="spacingAndGlyphs">Spacing:</text>
<text x="934.3" y="535.2" textLength="37.5" lengthAdjust="spacingAndGlyphs">Indent:</text>
</g>
<path d="M779 553.5 H789 M779 556.5 H789 M779 566.5 H789 M779 570.5 H789" stroke="#333" stroke-width="1"/>
<path d="M794.4 559.5 V552.5 M791.5 555.2 L794.4 552.2 L797.3 555.2 M794.4 565 V572 M791.5 569.3 L794.4 572.3 L797.3 569.3" fill="none" stroke="#2a8ad8" stroke-width="1.1"/>
<path d="M810.2 557.5 H820.1 M810.2 561.5 H820.1 M810.2 564.5 H820.1 M810.2 568.5 H820.1" stroke="#333" stroke-width="1"/>
<path d="M825.7 552 V559 M822.8 556.3 L825.7 559.3 L828.6 556.3 M825.7 572.5 V565.5 M822.8 568.2 L825.7 565.2 L828.6 568.2" fill="none" stroke="#2a8ad8" stroke-width="1.1"/>
<path d="M937 551.5 H955.7 M937 570.5 H955.7" stroke="#4a5568" stroke-width="1"/>
<path d="M945.3 555.5 H955.7 M945.3 561.5 H955.7 M945.3 566.5 H955.7" stroke="#8e7cc3" stroke-width="1"/>
<path d="M937 555.3 L941.2 558.4 L937 561.5 Z" fill="#8e7cc3"/>
<path d="M968.1 551.5 H986.8 M968.1 570.5 H986.8" stroke="#4a5568" stroke-width="1"/>
<path d="M975.9 555.5 H986.8 M975.9 561.5 H986.8 M975.9 566.5 H986.8" stroke="#8e7cc3" stroke-width="1"/>
<path d="M972.4 555.3 L968.2 558.4 L972.4 561.5 Z" fill="#8e7cc3"/>
<path d="M1001.3 550.5 H1020 M1009.1 555.5 H1020 M1009.1 560.5 H1020 M1009.1 565.5 H1020 M1009.1 570.5 H1020" stroke="#333" stroke-width="1"/>
<path d="M998.2 560.2 H1007 M1004 557.2 L1007.1 560.2 L1004 563.2" fill="none" stroke="#2a8ad8" stroke-width="1.1"/>
<!-- spin icons -->
<path d="M782.1 594.5 H796.2 M782.1 598.5 H796.2" stroke="#333" stroke-width="1"/>
<path d="M789.5 587 V593.7 M787 587 H792 M787 593.4 H792" fill="none" stroke="#2a8ad8" stroke-width="1"/>
<path d="M782.1 618.5 H796.2 M782.1 621.5 H796.2" stroke="#333" stroke-width="1"/>
<path d="M789.5 624 V631.5 M787 624.3 H792 M787 631.2 H792" fill="none" stroke="#2a8ad8" stroke-width="1"/>
<path d="M942.1 587.5 H955.7 M942.1 596.5 H955.7 M949.9 590.5 H955.7 M949.9 593.5 H955.7" stroke="#333" stroke-width="1"/>
<path d="M940.6 589.5 V595.8 M947.2 589.5 V595.8 M940.6 592.6 H947.2" fill="none" stroke="#2a8ad8" stroke-width="1"/>
<path d="M941.2 619.5 H954.9 M941.2 628.5 H954.9 M941.2 622.5 H947 M941.2 625.5 H947" stroke="#333" stroke-width="1"/>
<path d="M948.2 621.2 V627.6 M955.2 621.2 V627.6 M948.2 624.4 H955.2" fill="none" stroke="#2a8ad8" stroke-width="1"/>
<rect x="809.0" y="579.7" width="85.10000000000002" height="26.399999999999977" rx="4" fill="#e9e9e9" stroke="#d0d0d0" stroke-width="1"/>
<text x="812.8" y="597.5" font-size="12.6" fill="#222">0,12</text>
<text x="846.3" y="596.4" font-size="10" fill="#444">˝</text>
<path d="M884.0 590.3 L887.6 586.9 L891.2 590.3 M884.0 595.1 L887.6 598.5 L891.2 595.1" fill="none" stroke="#bcbcbc" stroke-width="1"/>
<rect x="809.0" y="611.8" width="85.10000000000002" height="26.600000000000023" rx="4" fill="#e9e9e9" stroke="#d0d0d0" stroke-width="1"/>
<text x="812.8" y="629.7" font-size="12.6" fill="#222">0,12</text>
<text x="846.3" y="628.6" font-size="10" fill="#444">˝</text>
<path d="M884.0 622.5 L887.6 619.1 L891.2 622.5 M884.0 627.3 L887.6 630.7 L891.2 627.3" fill="none" stroke="#bcbcbc" stroke-width="1"/>
<rect x="967.9" y="579.1" width="85.39999999999998" height="25.799999999999955" rx="4" fill="#e9e9e9" stroke="#d0d0d0" stroke-width="1"/>
<text x="972" y="596.6" font-size="12.6" fill="#222">0</text>
<text x="1006.5" y="595.5" font-size="10" fill="#444">˝</text>
<path d="M1043.2 589.4 L1046.8 586.0 L1050.4 589.4 M1043.2 594.2 L1046.8 597.6 L1050.4 594.2" fill="none" stroke="#bcbcbc" stroke-width="1"/>
<rect x="967.9" y="610.9" width="85.39999999999998" height="25.899999999999977" rx="4" fill="#e9e9e9" stroke="#d0d0d0" stroke-width="1"/>
<text x="972" y="628.4" font-size="12.6" fill="#222">0</text>
<text x="1006.5" y="627.3" font-size="10" fill="#444">˝</text>
<path d="M1043.2 621.2 L1046.8 617.8 L1050.4 621.2 M1043.2 626.0 L1046.8 629.4 L1050.4 626.0" fill="none" stroke="#bcbcbc" stroke-width="1"/>

<!-- frame overlay right -->
<rect x="1091" y="57" width="8" height="585" fill="#041e42"/>
<rect x="1099" y="5" width="4" height="637" fill="#03060f"/>
<rect x="1103" y="0" width="1" height="642" fill="#555"/>

</svg>
</body></html>
